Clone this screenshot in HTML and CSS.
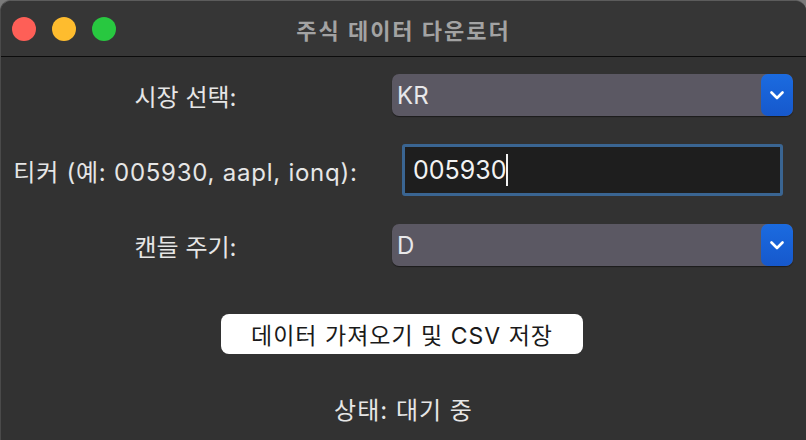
FILE: index.html
```html
<!DOCTYPE html>
<html lang="ko">
<head>
<meta charset="utf-8">
<link rel="stylesheet" href="styles.css">
</head>
<body>
<div class="window">
  <div class="titlebar">
    <div class="lights">
      <span class="light red"></span>
      <span class="light yellow"></span>
      <span class="light green"></span>
    </div>
    <div class="title">주식 데이터 다운로더</div>
  </div>
  <div class="content">
    <div class="form">
      <div class="label">시장 선택:</div>
      <div class="select">
        <span class="select-value">KR</span>
        <span class="select-btn"><svg width="14" height="9" viewBox="0 0 14 9"><path d="M1.5 1.5 L7 7 L12.5 1.5" fill="none" stroke="#fff" stroke-width="2.6" stroke-linecap="round" stroke-linejoin="round"/></svg></span>
      </div>
      <div class="label label-wide">티커 (예: 005930, aapl, ionq):</div>
      <div class="input"><span class="input-text">005930</span><span class="caret"></span></div>
      <div class="label">캔들 주기:</div>
      <div class="select">
        <span class="select-value">D</span>
        <span class="select-btn"><svg width="14" height="9" viewBox="0 0 14 9"><path d="M1.5 1.5 L7 7 L12.5 1.5" fill="none" stroke="#fff" stroke-width="2.6" stroke-linecap="round" stroke-linejoin="round"/></svg></span>
      </div>
    </div>
    <div class="actions">
      <button class="primary">데이터 가져오기 및 CSV 저장</button>
    </div>
    <div class="status">상태: 대기 중</div>
  </div>
</div>
</body>
</html>
```
FILE: styles.css
```css
html, body {
  margin: 0;
  padding: 0;
  width: 806px;
  height: 440px;
  overflow: hidden;
  background: #7a7a7a;
}
body {
  font-family: Inter, "Noto Sans CJK KR", sans-serif;
}
.window {
  width: 806px;
  height: 440px;
  background: #323232;
  border-top-left-radius: 11px;
  border-top-right-radius: 11px;
  overflow: hidden;
  box-sizing: border-box;
  border-top: 1px solid #5c5c5c;
  border-left: 1px solid #4a4a4a;
}
.titlebar {
  height: 55px;
  background: #363636;
  border-bottom: 1px solid #0c0c0c;
  display: flex;
  align-items: center;
  position: relative;
}
.lights {
  display: flex;
  gap: 16px;
  padding-left: 11px;
}
.light {
  width: 24px;
  height: 24px;
  border-radius: 50%;
  display: block;
}
.red { background: #fe5f57; }
.yellow { background: #febc2e; }
.green { background: #28c840; }
.title {
  position: absolute;
  left: 0;
  right: 0;
  top: 0;
  bottom: 0;
  display: flex;
  align-items: center;
  justify-content: center;
  color: #a3a3a3;
  font-weight: 700;
  font-size: 22px;
  letter-spacing: 2px;
  pointer-events: none;
}
.content {
  padding-top: 17px;
}
.form {
  display: grid;
  grid-template-columns: 369px 1fr;
  grid-template-rows: 42px 52px 42px;
  row-gap: 28px;
  align-items: center;
}
.label {
  color: #e6e6e6;
  font-size: 24px;
  text-align: center;
  white-space: nowrap;
}
.label-wide {
  letter-spacing: 0.75px;
}
.select {
  margin-left: 22px;
  margin-right: 13px;
  height: 42px;
  border-radius: 7px;
  background: #5b5863;
  box-shadow: 0 1px 1px rgba(0,0,0,0.45);
  display: flex;
  align-items: center;
  justify-content: space-between;
  overflow: hidden;
}
.select-value {
  color: #e8e8ea;
  font-size: 24px;
  padding-left: 5px;
}
.select-btn {
  width: 32px;
  height: 42px;
  border-radius: 7px;
  background: linear-gradient(#1b6be0, #1658cc);
  display: flex;
  align-items: center;
  justify-content: center;
}
.input {
  margin-left: 32px;
  margin-right: 23px;
  height: 52px;
  box-sizing: border-box;
  border: 3px solid #3a6592;
  border-radius: 3px;
  background: #1e1e1e;
  display: flex;
  align-items: center;
  padding-left: 8px;
}
.input-text {
  color: #f2f2f2;
  font-size: 25px;
}
.caret {
  width: 2px;
  height: 32px;
  background: #f2f2f2;
}
.actions {
  display: flex;
  justify-content: center;
  margin-top: 48px;
}
.primary {
  width: 362px;
  height: 40px;
  border: none;
  border-radius: 8px;
  background: #ffffff;
  color: #1a1a1a;
  font-family: Inter, "Noto Sans CJK KR", sans-serif;
  font-size: 23px;
  letter-spacing: 1px;
  padding: 0;
  margin-left: -3px;
}
.status {
  text-align: center;
  color: #e6e6e6;
  font-size: 24px;
  letter-spacing: 1px;
  margin-top: 37px;
}
```
